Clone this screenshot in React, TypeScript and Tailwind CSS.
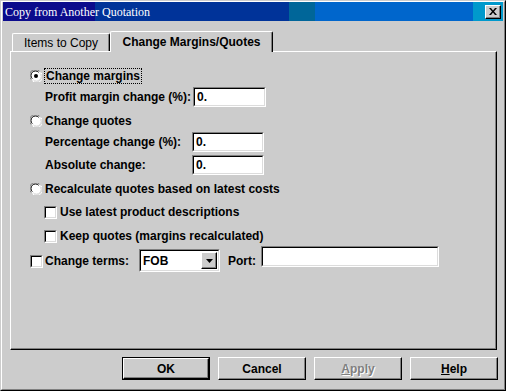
import React from 'react';

function Radio({ checked }: { checked?: boolean }) {
  return (
    <svg width="12" height="12" viewBox="0 0 12 12" className="shrink-0">
      <circle cx="6" cy="6" r="5.5" fill="#ffffff" />
      <path d="M1.2 9.5 A5.5 5.5 0 0 1 9.5 1.2" fill="none" stroke="#808080" strokeWidth="1" />
      <path d="M2.3 8.7 A4.4 4.4 0 0 1 8.7 2.3" fill="none" stroke="#000000" strokeWidth="1" />
      <path d="M10.8 2.5 A5.5 5.5 0 0 1 2.5 10.8" fill="none" stroke="#ffffff" strokeWidth="1" />
      <path d="M9.7 3.3 A4.4 4.4 0 0 1 3.3 9.7" fill="none" stroke="#dcdcdc" strokeWidth="1" />
      {checked && <circle cx="6" cy="6" r="2" fill="#000000" />}
    </svg>
  );
}

function Check() {
  return (
    <div className="w-[13px] h-[13px] shrink-0 border border-t-[#808080] border-l-[#808080] border-b-white border-r-white">
      <div className="w-full h-full bg-white border border-t-black border-l-black border-b-[#dcdcdc] border-r-[#dcdcdc]" />
    </div>
  );
}

function Field({ w, h = 20, value }: { w: string; h?: number; value?: string }) {
  return (
    <div
      className={`${w} shrink-0 border border-t-[#808080] border-l-[#808080] border-b-white border-r-white`}
      style={{ height: h }}
    >
      <div className="w-full h-full bg-white border border-t-black border-l-black border-b-[#dcdcdc] border-r-[#dcdcdc] flex items-center pl-[2px] text-[12px] font-bold">
        {value}
      </div>
    </div>
  );
}

function Btn({ children, isDefault }: { children: React.ReactNode; isDefault?: boolean }) {
  const inner = (
    <div className="w-full h-full border border-t-white border-l-white border-b-black border-r-black">
      <div className="w-full h-full flex items-center justify-center shadow-[inset_-1px_-1px_0_#808080] text-[12px] font-bold">
        {children}
      </div>
    </div>
  );
  if (isDefault) {
    return <div className="w-[88px] h-[23px] border border-black">{inner}</div>;
  }
  return <div className="w-[88px] h-[23px]">{inner}</div>;
}

export default function App() {
  return (
    <div className="w-[506px] h-[391px] bg-[#cccccc] border border-t-[#cccccc] border-l-[#cccccc] border-b-black border-r-black font-['Liberation_Sans',Arial,sans-serif] text-black select-none">
      <div className="h-full border border-t-white border-l-white border-b-[#808080] border-r-[#808080] px-px pb-px flex flex-col">
        {/* Title bar */}
        <div className="h-[19px] shrink-0 flex items-center justify-between pl-[2px] pr-[2px] bg-[linear-gradient(to_right,#0b0b8c_92px,#003399_92px,#003399_286px,#006699_286px,#006699_312px,#0066cc_312px,#0066cc_470px,#0099cc_470px)]">
          <span className="text-white text-[12px] font-['Liberation_Serif','Times_New_Roman',serif] leading-none">
            Copy from Another Quotation
          </span>
          <div className="w-[16px] h-[14px] border border-t-white border-l-white border-b-black border-r-black bg-[#cccccc] shadow-[inset_-1px_-1px_0_#808080] flex items-center justify-center">
            <svg width="8" height="7" viewBox="0 0 8 7">
              <path d="M0 0h2l2 2.5L6 0h2L5 3.5 8 7H6L4 4.5 2 7H0l3-3.5z" fill="#000" />
            </svg>
          </div>
        </div>

        {/* Tabs + panel */}
        <div className="ml-[7px] mt-[10px] w-[487px]">
          <div className="flex items-end h-[20px] pl-[2px]">
            <div className="w-[98px] h-[18px] rounded-t-[2px] border-l border-t border-r border-l-white border-t-white border-r-black shadow-[inset_-1px_0_0_#808080] flex items-center justify-center text-[12px] pt-px">
              Items to Copy
            </div>
            <div className="relative z-10 -mb-px w-[163px] h-[21px] bg-[#cccccc] rounded-t-[2px] border-l border-t border-r border-l-white border-t-white border-r-black shadow-[inset_-1px_0_0_#808080] flex items-center justify-center text-[12px] font-bold pb-px">
              Change Margins/Quotes
            </div>
          </div>

          <div className="h-[299px] border border-t-white border-l-white border-b-black border-r-black shadow-[inset_-1px_-1px_0_#808080] pt-[16px] pl-[19px] text-[12px] font-bold">
            <div className="h-[16px] flex items-center gap-[2px]">
              <Radio checked />
              <span className="border border-dotted border-black px-px leading-[14px]">Change margins</span>
            </div>
            <div className="mt-[3px] h-[20px] flex items-center pl-[15px]">
              <span className="w-[148px]">Profit margin change (%):</span>
              <Field w="w-[73px]" value="0." />
            </div>
            <div className="mt-[6px] h-[16px] flex items-center gap-[3px]">
              <Radio />
              <span>Change quotes</span>
            </div>
            <div className="mt-[3px] h-[20px] flex items-center pl-[15px]">
              <span className="w-[147px]">Percentage change (%):</span>
              <Field w="w-[72px]" value="0." />
            </div>
            <div className="mt-[3px] h-[20px] flex items-center pl-[15px]">
              <span className="w-[147px]">Absolute change:</span>
              <Field w="w-[72px]" value="0." />
            </div>
            <div className="mt-[6px] h-[16px] flex items-center gap-[3px]">
              <Radio />
              <span>Recalculate quotes based on latest costs</span>
            </div>
            <div className="mt-[7px] h-[16px] flex items-center gap-[3px] pl-[14px]">
              <Check />
              <span>Use latest product descriptions</span>
            </div>
            <div className="mt-[8px] h-[16px] flex items-center gap-[3px] pl-[14px]">
              <Check />
              <span>Keep quotes (margins recalculated)</span>
            </div>
            <div className="mt-[2px] h-[26px] flex items-start">
              <div className="mt-[6px] flex items-center gap-[2px]">
                <Check />
                <span>Change terms:</span>
              </div>
              <div className="ml-[10px] mt-[3px] w-[81px] h-[23px] border border-t-[#808080] border-l-[#808080] border-b-white border-r-white">
                <div className="w-full h-full bg-white border border-t-black border-l-black border-b-[#dcdcdc] border-r-[#dcdcdc] flex items-center justify-between pl-[2px] pr-px">
                  <span>FOB</span>
                  <div className="w-[16px] h-[17px] bg-[#cccccc] border border-t-white border-l-white border-b-black border-r-black shadow-[inset_-1px_-1px_0_#808080] flex items-center justify-center">
                    <svg width="7" height="4" viewBox="0 0 7 4">
                      <path d="M0 0h7L3.5 4z" fill="#000" />
                    </svg>
                  </div>
                </div>
              </div>
              <span className="ml-[8px] mt-[6px]">Port:</span>
              <div className="ml-[5px]">
                <Field w="w-[178px]" h={21} />
              </div>
            </div>
          </div>
        </div>

        {/* Buttons */}
        <div className="mt-[7px] flex justify-end gap-[8px] pr-[5px]">
          <Btn isDefault>OK</Btn>
          <Btn>Cancel</Btn>
          <Btn>
            <span className="text-[#808080] [text-shadow:1px_1px_0_#ffffff]">
              <span className="underline">A</span>pply
            </span>
          </Btn>
          <Btn>
            <span>
              <span className="underline">H</span>elp
            </span>
          </Btn>
        </div>
      </div>
    </div>
  );
}
